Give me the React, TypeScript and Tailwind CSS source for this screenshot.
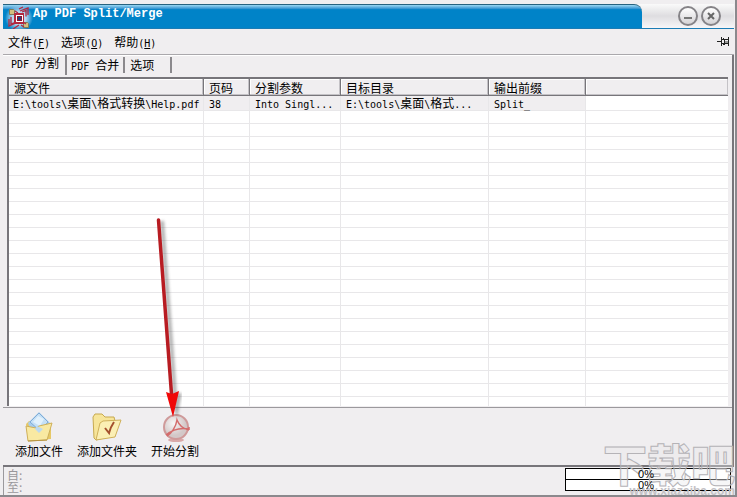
import { ComponentProps, Fragment, ReactNode, useState } from "react";
import { twMerge } from "tailwind-merge";

const columns = [
    { title: "源文件", width: "w-[195px]" },
    { title: "页码", width: "w-[46px]" },
    { title: "分割参数", width: "w-[91px]" },
    { title: "目标目录", width: "w-[148px]" },
    { title: "输出前缀", width: "w-[97px]" },
    { title: "", width: "w-auto" },
];

const files = [
    [
        "E:\\tools\\桌面\\格式转换\\Help.pdf",
        "38",
        "Into Singl...",
        "E:\\tools\\桌面\\格式...",
        "Split_",
        "",
    ],
];

const blankRows = Array.from({ length: 23 }, (_, i) => i);

// Latin runs are set half as wide as a Chinese character
function Mixed({ text }: { text: string }) {
    return (
        <>
            {text.split(/([\u4e00-\u9fff]+)/).map((part, i) =>
                i % 2 ? (
                    <Fragment key={i}>{part}</Fragment>
                ) : (
                    <span
                        key={i}
                        className="font-['DejaVu_Sans_Mono',monospace] text-[10px] leading-none"
                    >
                        {part}
                    </span>
                ),
            )}
        </>
    );
}

function AppLogo() {
    return (
        <svg viewBox="0 0 28 24" className="h-6 w-7">
            <defs>
                <radialGradient id="halo">
                    <stop offset="0.5" stopColor="#b9d6ec" />
                    <stop offset="1" stopColor="#b9d6ec" stopOpacity="0" />
                </radialGradient>
            </defs>
            <ellipse cx="14" cy="13" rx="14" ry="13" fill="url(#halo)" />
            <path
                d="M4.500 4.500h4l1 1v4h-5z M18.500 17.500h4l1 1v4h-5z"
                fill="#d3bf80"
                stroke="#7f7a58"
            />
            <g fill="none" stroke="#b3283f" strokeWidth="1.300">
                <path d="M15 6l8-3v7M14 4l4-2M17 7l4-1.500v6" />
                <path d="M4 14v7l7-3M6 12v7l5-2M8 24l6-4" />
                <path d="M9 9l3 2M18 17l3 2M10 6l3 2M16 20l3 2" />
            </g>
            <path d="M9 8h10v11H9z" fill="#b3283f" />
            <path d="M11 10h7v7h-7z" fill="#fff" />
            <path d="M12 11h5v5h-5z" fill="#8c1530" />
            <path d="M13 12h3v3h-3z" fill="#27407f" />
        </svg>
    );
}

function PinIcon() {
    return (
        <svg
            viewBox="0 0 13 11"
            className="h-[11px] w-[13px]"
            fill="none"
            stroke="#222"
        >
            <path d="M0 5.500h4M4.500 1v9M5 3.500h2M5 7.500h2M7.500 3v6M8 3.500h3M8 7.500h3M11.500 1v9M6 2.500h1M6 8.500h1" />
            <path d="M8 5.500h3M8 6.500h3" stroke="#999" />
        </svg>
    );
}

function FolderFileIcon() {
    return (
        <svg viewBox="0 0 30 32" className="h-8 w-[30px]">
            <path d="M2 13l3-3h5l2 2h13l2 3v13l-22 2z" fill="#e6c867" />
            <path d="M4 12l11-11 11 11-5 11H8z" fill="#a9cdec" />
            <path d="M6 11l9-9 9 9-8 9z" fill="#c5e0f6" stroke="#80acd6" />
            <path d="M9 11l5-6 6 3-4 7z" fill="#e2f1fc" />
            <path
                d="M2 15l10 2 3-2 13-3-5 17-19 1z"
                fill="#f9e9a2"
                stroke="#cfb05a"
            />
            <path d="M13 15l6 3-4 4-4-4z" fill="#bcd9f0" />
            <path d="M4 30l19-1" stroke="#b79543" />
        </svg>
    );
}

function FolderCheckIcon() {
    return (
        <svg viewBox="0 0 32 32" className="h-8 w-8">
            <path
                d="M2 6l2-3h7l3 3h9l1 4v14L5 29 3 27z"
                fill="#f7e59a"
                stroke="#c7a94f"
            />
            <path
                d="M9 12l3-2 18-1-6 17-19 3z"
                fill="#fbefb4"
                stroke="#cfb05a"
            />
            <path
                d="M14 17l4 5c1-5 3-8 5-11"
                fill="none"
                stroke="#a4502d"
                strokeWidth="2"
            />
        </svg>
    );
}

function AcrobatIcon() {
    return (
        <svg viewBox="0 0 32 32" className="h-8 w-8">
            <defs>
                <radialGradient id="ball" cx="0.4" cy="0.35">
                    <stop offset="0" stopColor="#f8f6f6" />
                    <stop offset="1" stopColor="#d3c8c8" />
                </radialGradient>
            </defs>
            <ellipse cx="17" cy="29" rx="8" ry="2" fill="#d9a9a9" />
            <circle
                cx="17"
                cy="16"
                r="12"
                fill="url(#ball)"
                stroke="#cf9a9a"
                strokeWidth="2"
            />
            <path
                d="M8 25c4-2 9-9 10-16 2 5 6 9 12 10M7 24c6-5 13-8 23-6v-2"
                fill="none"
                stroke="#d46c6c"
                strokeWidth="1.500"
            />
        </svg>
    );
}

function RoundButton({ children, ...props }: ComponentProps<"button">) {
    return (
        <button
            className="flex size-5 items-center justify-center rounded-full border-2 border-[#858387] bg-linear-to-b from-white to-[#d5d3d6]"
            {...props}
        >
            <svg viewBox="0 0 10 10" className="size-[10px]">
                {children}
            </svg>
        </button>
    );
}

function TitleBar() {
    return (
        <header className="flex h-[25px] border-b border-[#1b7cb5] bg-linear-to-b from-[#fafafa] via-[#dedde0] to-[#f7f6f8]">
            <div className="flex grow rounded-tr-lg border-t border-[#27627f] bg-linear-to-b from-[#9bd8f3] from-0% via-[#0083c8] via-20% to-[#0083c8] pl-[2px]">
                <AppLogo />
                <h1 className="pt-px font-['Liberation_Mono',monospace] text-xs leading-4 font-bold text-white">
                    Ap PDF Split/Merge
                </h1>
            </div>
            <div className="flex w-[92px] items-start justify-end gap-[3px] pt-[2px] pr-[13px]">
                <RoundButton aria-label="最小化">
                    <path d="M1 7h8" stroke="#777" strokeWidth="2" />
                </RoundButton>
                <RoundButton aria-label="关闭">
                    <path d="M2 2l6 6M8 2l-6 6" stroke="#666" strokeWidth="2" />
                </RoundButton>
            </div>
        </header>
    );
}

function MenuItem({ label, hotkey }: { label: string; hotkey: string }) {
    return (
        <button className="whitespace-nowrap">
            {label}
            <span className="font-['DejaVu_Sans_Mono',monospace] text-[10px] leading-none">
                (<u>{hotkey}</u>)
            </span>
        </button>
    );
}

function ToolButton({
    icon,
    label,
    ...props
}: { icon: ReactNode; label: string } & ComponentProps<"button">) {
    return (
        <button
            className="flex flex-col items-center text-xs leading-4 whitespace-nowrap"
            {...props}
        >
            {icon}
            {label}
        </button>
    );
}

function Progress({ label, value }: { label: string; value: number }) {
    return (
        <div
            role="progressbar"
            aria-label={label}
            aria-valuenow={value}
            className="flex h-3 items-center justify-center border border-black bg-white pr-1 font-['Liberation_Sans',sans-serif] text-[11px] leading-[10px]"
        >
            <span className="relative z-10">{value}%</span>
        </div>
    );
}

function FileTable() {
    return (
        <table className="w-full table-fixed border-separate border-spacing-0">
            <thead>
                <tr className="h-4">
                    {columns.map((column) => (
                        <th
                            key={column.title}
                            className={twMerge(
                                "border-r border-b border-[#77757a] bg-[#f0eef0] p-0 pt-px pl-[5px] text-left leading-[15px] font-normal shadow-[inset_-1px_-1px_0_#c4c2c6,inset_1px_1px_0_#fff] last:border-r-0",
                                column.width,
                            )}
                        >
                            {column.title}
                        </th>
                    ))}
                </tr>
            </thead>
            <tbody>
                {files.map((file) => (
                    <tr key={file[0]} className="h-[14px]">
                        {file.map((cell, i) => (
                            <td
                                key={i}
                                className="border-r border-b border-[#e8e7e9] bg-[#f0eef0] p-0 pl-[5px] leading-[14px] whitespace-nowrap first:pl-1 last:border-r-0 last:bg-white"
                            >
                                <Mixed text={cell} />
                            </td>
                        ))}
                    </tr>
                ))}
                {blankRows.map((row) => (
                    <tr key={row} className="h-[13px]">
                        {columns.map((column) => (
                            <td
                                key={column.title}
                                className="border-r border-b border-[#e8e7e9] p-0 last:border-r-0"
                            />
                        ))}
                    </tr>
                ))}
            </tbody>
        </table>
    );
}

function Arrow() {
    return (
        <svg
            viewBox="0 0 32 208"
            className="pointer-events-none absolute top-[214px] left-[150px] h-[208px] w-8"
        >
            <defs>
                <filter id="soft" x="-50%" width="200%">
                    <feGaussianBlur stdDeviation="1.5" />
                </filter>
            </defs>
            <g filter="url(#soft)" opacity="0.45">
                <path d="M12 7l13 175" stroke="#555" strokeWidth="4" />
                <path d="M20 180l12-1-5 25z" fill="#555" />
            </g>
            <path
                d="M8.500 6l13 174"
                stroke="#b81c22"
                strokeWidth="3.500"
                strokeLinecap="round"
            />
            <path d="M16 178l6 2 7-3-6 26z" fill="#f00808" />
        </svg>
    );
}

function Watermark() {
    return (
        <div className="pointer-events-none absolute right-0 -bottom-[2px] text-right">
            <p className="font-['Noto_Sans_CJK_SC',sans-serif] text-[44px] leading-[44px] font-black text-[#e9e8ea]/40 [-webkit-text-stroke:1px_#b5b3b7]">
                下载吧
            </p>
            <p className="font-['Liberation_Sans',sans-serif] text-xs leading-3 font-bold text-[#c4c2c6]">
                www.xiazaiba.com
            </p>
        </div>
    );
}

export default function App() {
    const [tab, setTab] = useState("PDF 分割");
    return (
        <div className="relative flex h-screen flex-col overflow-hidden border-r-2 border-b-2 border-[#8b898d] bg-[#f0eef0] pt-1 pr-px pl-[3px] font-['Noto_Sans_CJK_SC',sans-serif] text-xs text-black">
            <TitleBar />
            <nav className="flex h-[26px] items-center gap-[11px] border-b border-[#aaa8ac] pt-px pr-1 pl-[5px] shadow-[0_1px_0_#fff]">
                <MenuItem label="文件" hotkey="F" />
                <MenuItem label="选项" hotkey="O" />
                <MenuItem label="帮助" hotkey="H" />
                <button aria-label="置顶" className="ml-auto">
                    <PinIcon />
                </button>
            </nav>
            <main className="flex min-h-0 grow flex-col border-r-2 border-b-2 border-[#77757a]">
                <div role="tablist" className="flex h-[23px] items-end">
                    {["PDF 分割", "PDF 合并", "选项"].map((name) => (
                        <button
                            key={name}
                            role="tab"
                            aria-selected={tab === name}
                            onClick={() => setTab(name)}
                            className="mb-1 h-4 border-r-2 border-[#8b898d] pr-1 pl-1 leading-4 whitespace-nowrap last:pr-4 last:pl-[5px] aria-selected:mb-[2px] aria-selected:h-5 aria-selected:pr-[6px] aria-selected:pb-1 aria-selected:pl-2"
                        >
                            <Mixed text={name} />
                        </button>
                    ))}
                </div>
                <div className="mr-1 ml-1 min-h-0 grow overflow-hidden border-t-2 border-l-2 border-[#77757a] bg-white">
                    <FileTable />
                </div>
                <div className="mt-px flex h-[58px] shrink-0 gap-[14px] border-t border-[#9b999d] px-3 pt-[3px]">
                    <ToolButton icon={<FolderFileIcon />} label="添加文件" />
                    <ToolButton icon={<FolderCheckIcon />} label="添加文件夹" />
                    <ToolButton icon={<AcrobatIcon />} label="开始分割" />
                </div>
            </main>
            <footer className="flex h-7 shrink-0 justify-between border-l border-[#9b999d] pr-[3px] text-[#99979b]">
                <div className="pt-[2px] pl-[3px] leading-3">
                    <p>自:</p>
                    <p>至:</p>
                </div>
                <div className="w-[166px] pt-px text-black">
                    <Progress label="自" value={0} />
                    <div className="-mt-px">
                        <Progress label="至" value={0} />
                    </div>
                </div>
            </footer>
            <Arrow />
            <Watermark />
        </div>
    );
}
